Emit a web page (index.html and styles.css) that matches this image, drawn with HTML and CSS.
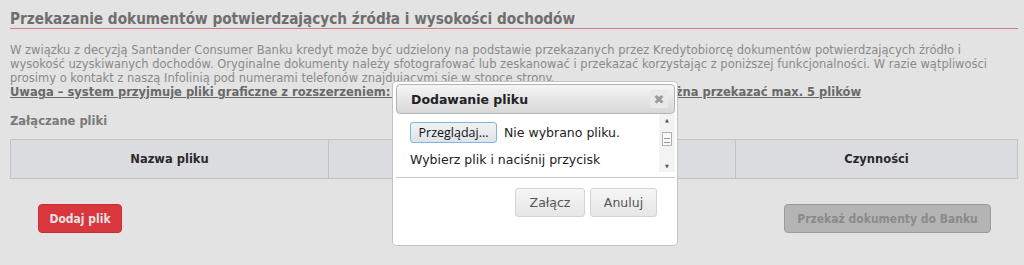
FILE: index.html
```html
<!DOCTYPE html>
<html lang="pl">

<head>
    <meta charset="UTF-8">
    <title>Przekazanie dokumentów</title>
    <link rel="stylesheet" href="styles.css">
</head>

<body>
    <div class="page">
        <h1 class="title">Przekazanie dokumentów potwierdzających źródła i wysokości dochodów</h1>
        <p class="info">
            W związku z decyzją Santander Consumer Banku kredyt może być udzielony na podstawie przekazanych przez Kredytobiorcę dokumentów potwierdzających źródło i
            wysokość uzyskiwanych dochodów. Oryginalne dokumenty należy sfotografować lub zeskanować i przekazać korzystając z poniższej funkcjonalności. W razie wątpliwości
            prosimy o kontakt z naszą Infolinią pod numerami telefonów znajdującymi się w stopce strony.<br>
            <strong class="note">Uwaga – system przyjmuje pliki graficzne z rozszerzeniem: jpg, jpeg, png, gif, tif, pdf. Jednorazowo można przekazać max. 5 plików</strong>
        </p>
        <h2 class="files-label">Załączane pliki</h2>
        <table class="files">
            <thead>
                <tr>
                    <th class="col-name">Nazwa pliku</th>
                    <th class="col-size">Rozmiar</th>
                    <th class="col-actions">Czynności</th>
                </tr>
            </thead>
        </table>
        <div class="actions">
            <button class="btn btn-red">Dodaj plik</button>
            <button class="btn btn-off" disabled>Przekaż dokumenty do Banku</button>
        </div>
    </div>

    <div class="overlay"></div>

    <div class="dialog">
        <div class="dialog-bar">
            <span class="dialog-title">Dodawanie pliku</span>
            <span class="dialog-close">&#10006;</span>
        </div>
        <div class="dialog-body">
            <div class="dialog-scroll">
                <div class="file-row">
                    <span class="file-btn">Przeglądaj...</span>
                    <span class="file-name">Nie wybrano pliku.</span>
                </div>
                <p class="hint">Wybierz plik i naciśnij przycisk</p>
                <p class="hint">Załącz.</p>
            </div>
            <div class="scrollbar">
                <span class="arrow">&#9650;</span>
                <span class="thumb"></span>
                <span class="track"></span>
                <span class="arrow">&#9660;</span>
            </div>
        </div>
        <div class="dialog-foot">
            <button class="dbtn">Załącz</button>
            <button class="dbtn">Anuluj</button>
        </div>
    </div>
</body>

</html>
```

FILE: styles.css
```css
body {
    margin: 0;
    padding: 0;
    background: #ffffff;
    font-family: 'DejaVu Sans', Verdana, sans-serif;
    font-size: 11.5px;
}

.page {
    padding: 0 6px 0 10px;
}

.title {
    margin: 0;
    padding-top: 10px;
    font-family: 'DejaVu Sans Condensed', 'DejaVu Sans', sans-serif;
    font-size: 15.2px;
    line-height: 18px;
    font-weight: bold;
    color: #7c7c7c;
    border-bottom: 1px solid #f48a90;
}

.info {
    margin: 14px 0 0 0;
    line-height: 14px;
    color: #9c9c9c;
}

.note {
    color: #767676;
    text-decoration: underline;
}

.files-label {
    margin: 15px 0 0 0;
    font-size: 11.5px;
    line-height: 14px;
    color: #8a8a8a;
}

.files {
    margin-top: 11px;
    width: 100%;
    border-collapse: collapse;
}

.files th {
    height: 38px;
    padding: 0;
    border: 1px solid #dcdce0;
    background: #f7f8fb;
    color: #2f2f2f;
    font-size: 11.5px;
}

.col-name {
    width: 317px;
}

.col-size {
    width: 406px;
}

.actions {
    margin-top: 25px;
    padding: 0 27px 0 28px;
    display: flex;
    justify-content: space-between;
}

.btn {
    height: 29px;
    border-radius: 4px;
    font-family: 'DejaVu Sans Condensed', 'DejaVu Sans', sans-serif;
    font-size: 12px;
    font-weight: bold;
    padding: 0;
    white-space: nowrap;
}

.btn-red {
    width: 84px;
    background: #f43d45;
    border: 1px solid #e3343c;
    color: #ffffff;
}

.btn-off {
    width: 207px;
    background: #cbcbcb;
    border: 1px solid #afafaf;
    color: #9b9b9b;
}

.overlay {
    position: fixed;
    inset: 0;
    background: rgba(0, 0, 0, 0.11);
}

/* modal */

.dialog {
    position: absolute;
    left: 392px;
    top: 81px;
    width: 286px;
    height: 165px;
    box-sizing: border-box;
    padding: 2px 2px 0 3px;
    background: #ffffff;
    border: 1px solid #c4c4c4;
    border-radius: 4px;
    font-family: 'DejaVu Sans', Verdana, sans-serif;
}

.dialog-bar {
    height: 30px;
    box-sizing: border-box;
    display: flex;
    align-items: center;
    justify-content: space-between;
    padding: 0 6px 0 14px;
    border: 1px solid #b4b4b4;
    border-radius: 4px;
    background: linear-gradient(#f5f5f5, #d8d8d8);
}

.dialog-title {
    font-size: 12.5px;
    font-weight: bold;
    color: #222222;
}

.dialog-close {
    width: 18px;
    height: 18px;
    display: flex;
    align-items: center;
    justify-content: center;
    background: #e9e9e9;
    border-radius: 2px;
    color: #9a9a9a;
    font-size: 13px;
}

.dialog-body {
    height: 58px;
    display: flex;
}

.dialog-scroll {
    flex: 1;
    overflow: hidden;
    padding: 8px 0 0 14px;
}

.file-row {
    display: flex;
    align-items: center;
    gap: 7px;
}

.file-btn {
    width: 87px;
    height: 21px;
    box-sizing: border-box;
    display: flex;
    align-items: center;
    justify-content: center;
    border: 1px solid #7eb4ea;
    border-radius: 3px;
    background: linear-gradient(#f2f2f2, #dfe3e8);
    font-family: 'Open Sans', sans-serif;
    font-size: 12.5px;
    color: #111111;
}

.file-name,
.hint {
    font-size: 12.5px;
    color: #222222;
}

.hint {
    margin: 9px 0 0 0;
}

.scrollbar {
    width: 16px;
    display: flex;
    flex-direction: column;
    align-items: center;
    background: #f3f3f3;
}

.scrollbar .arrow {
    height: 12px;
    font-size: 5px;
    line-height: 12px;
    color: #555555;
}

.scrollbar .thumb {
    width: 10px;
    height: 14px;
    margin-top: 6px;
    box-sizing: border-box;
    border: 1px solid #b0b0b0;
    background: repeating-linear-gradient(#f8f8f8 0, #f8f8f8 3px, #9a9a9a 3px, #9a9a9a 4px);
    background-size: 6px 10px;
    background-position: center 2px;
    background-repeat: no-repeat;
    background-color: #f8f8f8;
}

.scrollbar .track {
    flex: 1;
}

.dialog-foot {
    margin-top: 5px;
    border-top: 1px solid #c6c6c6;
    padding: 10px 18px 0 0;
    display: flex;
    justify-content: flex-end;
    gap: 5px;
}

.dbtn {
    height: 29px;
    padding: 0;
    border: 1px solid #d4d4d4;
    border-radius: 3px;
    background: linear-gradient(#f6f6f6, #e6e6e6);
    font-family: 'DejaVu Sans', Verdana, sans-serif;
    font-size: 12.5px;
    color: #555555;
}

.dbtn:first-child {
    width: 70px;
}

.dbtn:last-child {
    width: 67px;
}
```
